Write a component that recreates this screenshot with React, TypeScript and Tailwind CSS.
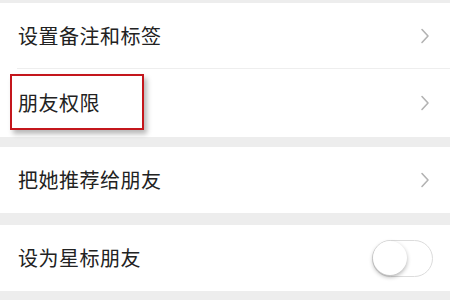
import React from "react";

const Chevron = () => (
  <svg width="10" height="16" viewBox="0 0 10 16" fill="none" className="shrink-0">
    <path d="M2 1.5 L8 8 L2 14.5" stroke="#b3b3b3" strokeWidth="1.6" strokeLinecap="round" strokeLinejoin="round" />
  </svg>
);

export default function App() {
  return (
    <div
      className="w-[450px] h-[300px] overflow-hidden bg-[#ededed] flex flex-col"
      style={{ fontFamily: '"Noto Sans CJK SC", "Noto Sans", sans-serif' }}
    >
      <div className="h-[3px] shrink-0" />
      <div className="bg-white flex flex-col">
        <div className="h-[65px] flex items-center justify-between pl-[18px] pr-[20px]">
          <span className="text-[20px] tracking-[0.5px] text-[#222]">设置备注和标签</span>
          <Chevron />
        </div>
        <div className="ml-[17px] h-px bg-[#eeeeee]" />
        <div className="relative h-[68px] flex items-center justify-between pl-[18px] pr-[20px]">
          <div className="absolute left-[10px] top-[5px] w-[134px] h-[56px] border-2 border-[#c4161c] shadow-[3px_4px_5px_rgba(0,0,0,0.28)]" />
          <span className="relative text-[20px] tracking-[0.5px] text-[#222]">朋友权限</span>
          <Chevron />
        </div>
      </div>
      <div className="h-[10px] shrink-0" />
      <div className="bg-white h-[66px] flex items-center justify-between pl-[18px] pr-[20px]">
        <span className="text-[20px] tracking-[0.5px] text-[#222]">把她推荐给朋友</span>
        <Chevron />
      </div>
      <div className="h-[12px] shrink-0" />
      <div className="bg-white h-[66px] flex items-center justify-between pl-[18px] pr-[17px]">
        <span className="text-[20px] tracking-[0.5px] text-[#222]">设为星标朋友</span>
        <div className="w-[61px] h-[37px] rounded-full border-[1.5px] border-[#dcdcdc] bg-white flex items-center">
          <div className="w-[34px] h-[34px] rounded-full bg-white shadow-[0_2px_4px_rgba(0,0,0,0.3)]" />
        </div>
      </div>
    </div>
  );
}
